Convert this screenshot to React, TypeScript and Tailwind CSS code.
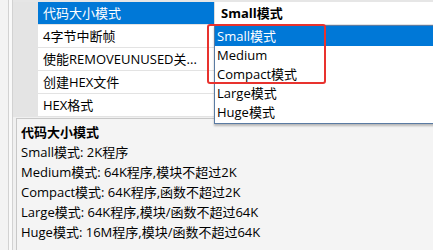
import * as React from "react";

const FONT = { fontFamily: '"Open Sans", "Noto Sans CJK SC", sans-serif' };

const props = [
  "代码大小模式",
  "4字节中断帧",
  "使能REMOVEUNUSED关...",
  "创建HEX文件",
  "HEX格式",
];

const options = ["Small模式", "Medium", "Compact模式", "Large模式", "Huge模式"];

const help = [
  "Small模式: 2K程序",
  "Medium模式: 64K程序,模块不超过2K",
  "Compact模式: 64K程序,函数不超过2K",
  "Large模式: 64K程序,模块/函数不超过64K",
  "Huge模式: 16M程序,模块/函数不超过64K",
];

export default function App() {
  return (
    <div
      className="relative flex h-[250px] w-[433px] overflow-hidden bg-[#f0f0f0] text-[13px] text-black"
      style={FONT}
    >
      {/* left gutter */}
      <div className="w-[8px] bg-[#f3f3f3]" />
      <div className="w-px bg-[#d2d2d2]" />
      <div className="w-[3px] bg-[#f9f9f9]" />
      <div className="w-px bg-[#d2d2d2]" />

      <div className="flex flex-1 flex-col">
        {/* property grid */}
        <div className="flex h-[117px] border-t-2 border-[#e6e6e6] bg-white">
          <div className="w-[25px] bg-[#e4e4e4]" />
          <div className="flex w-[177px] flex-col border-r border-[#dcdcdc]">
            {props.map((p, i) => (
              <div
                key={p}
                className={`flex h-[23px] items-center border-b border-[#e3e3e3] pl-[5px] leading-none ${
                  i === 0 ? "bg-[#0078d7] text-white" : ""
                }`}
              >
                {p}
              </div>
            ))}
          </div>
          <div className="flex flex-1 flex-col">
            <div className="flex h-[23px] items-center border-b border-[#e3e3e3] pl-[6px] font-bold leading-none">
              Small模式
            </div>
          </div>
        </div>

        {/* description */}
        <div className="ml-[3px] mt-[1px] flex-1 border-l border-t border-[#c8c8c8] bg-[#f4f4f4] pl-[4px] pt-[3px]">
          <div className="h-[20px] leading-[20px] font-bold">代码大小模式</div>
          {help.map((h) => (
            <div key={h} className="h-[20px] leading-[20px]">
              {h}
            </div>
          ))}
        </div>
      </div>

      {/* dropdown list */}
      <div className="absolute left-[214px] top-[25px] h-[99px] w-[230px] border border-[#5a7ba3] bg-white shadow-[0_2px_2px_rgba(0,0,0,0.25)]">
        {options.map((o, i) => (
          <div
            key={o}
            className={`flex h-[19px] items-center pl-[2px] leading-none ${
              i === 0 ? "h-[20px] bg-[#0078d7] text-white" : ""
            }`}
          >
            {o}
          </div>
        ))}
      </div>

      {/* highlight box */}
      <div className="absolute left-[207px] top-[24px] h-[60px] w-[119px] rounded-[3px] border-2 border-[#e8322e]" />
    </div>
  );
}
